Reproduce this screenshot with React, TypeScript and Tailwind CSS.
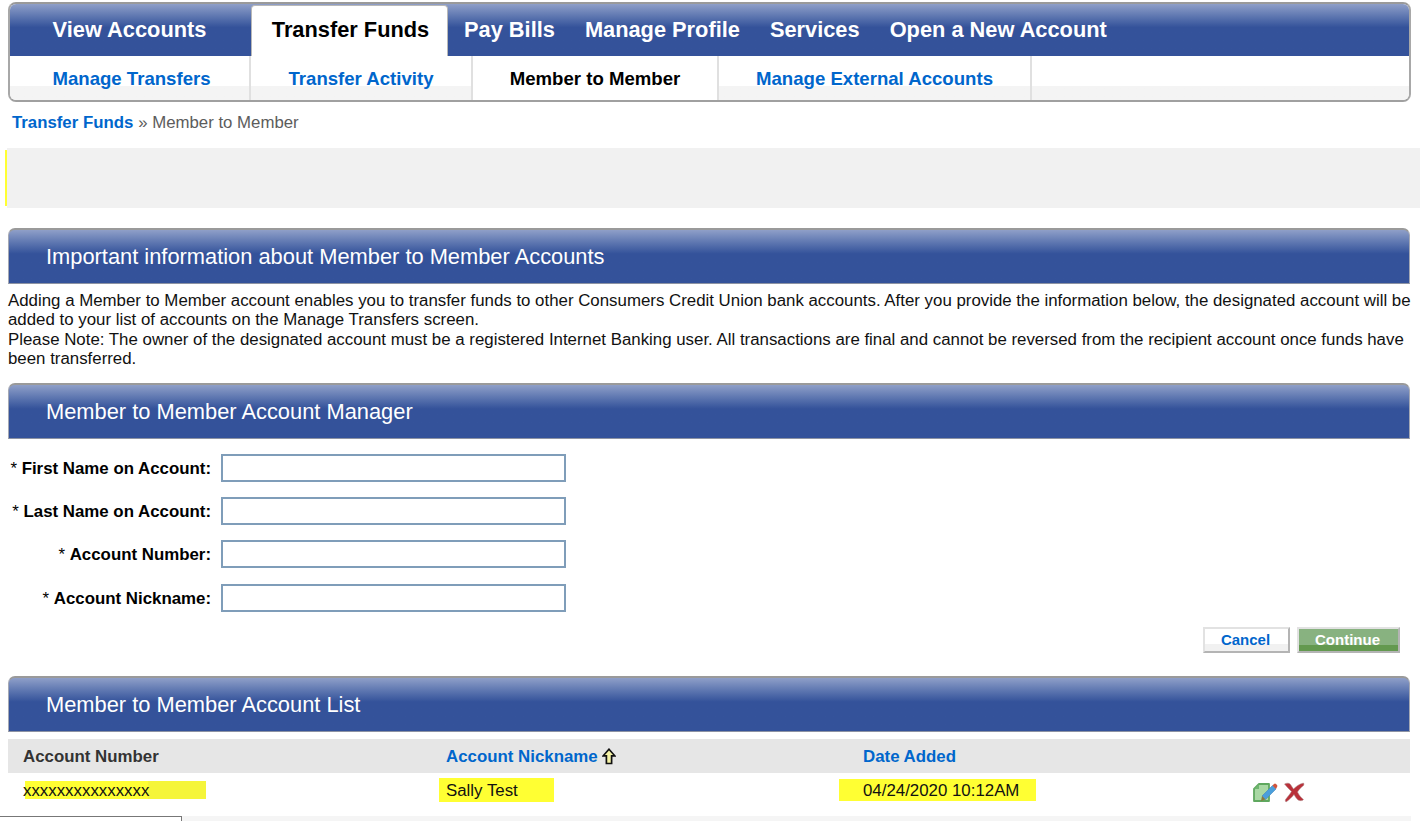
const TOP_TABS = ["Pay Bills", "Manage Profile", "Services", "Open a New Account"];

const FIELDS = [
  "First Name on Account:",
  "Last Name on Account:",
  "Account Number:",
  "Account Nickname:",
];

function SectionHeader({ title }: { title: string }) {
  return (
    <div className="h-[56px] flex items-center pl-[37px] pt-[2px] rounded-tl-[7px] rounded-tr-[7px] border-t-2 border-x border-t-[#9a9a9a] border-x-[#a4a8b4] border-b border-b-[#8d93a3] bg-gradient-to-b from-[#8f9fc8] via-[#34529a] via-45% to-[#34529a] text-white text-[21.85px]">
      {title}
    </div>
  );
}

function EditIcon() {
  return (
    <svg width="26" height="22" viewBox="0 0 26 22" className="blur-[0.4px]">
      <path d="M7 3h10v17H2V8z" fill="#a9d8a4" stroke="#5fa85f" strokeWidth="1.800" strokeLinejoin="round" />
      <path d="M2 8h5V3z" fill="#6fb56f" />
      <path d="M10 15 20.500 4.500 24 8 13.500 18.500z" fill="#4a9fdc" stroke="#3f86bd" strokeWidth="0.6" />
      <path d="m20.500 4.500 1.500-1.500a1.500 1.500 0 0 1 2 0l1 1a1.500 1.500 0 0 1 0 2L24 8z" fill="#d0543c" />
      <path d="m10 15 3.500 3.500-4.500 1.500z" fill="#8a7a3c" />
    </svg>
  );
}

function DeleteIcon() {
  return (
    <svg width="22" height="21" viewBox="0 0 22 21" className="blur-[0.4px]">
      <path
        d="M1.500 2c2-1.200 5-1.200 6 .5 1 1.500 2 3 3 4.500C13 4.500 16 2 20.500 1c.5 1 .5 2 0 2.500-2.500 2-4.500 4-6 6.500 1.500 3 3.500 5.500 6 7.500-1 1.500-3.500 1.500-5.500.5-1.500-1.500-3-3.500-4-5.500-2 2.500-4.500 5-8 7.500-.5-.5-1-1.500-.5-2.500 2-2.500 4.500-5.500 6-8C6.500 7.500 4 5 1.500 2z"
        fill="#b9313a"
        stroke="#a98a8a"
        strokeWidth="0.5"
      />
    </svg>
  );
}

function SortArrow() {
  return (
    <svg width="14" height="17" viewBox="0 0 14 17">
      <path d="M7 1.200 12.800 7.800H9.600v7.700H4.400V7.800H1.200z" fill="#f6f3a6" stroke="#111" strokeWidth="1.700" strokeLinejoin="miter" />
    </svg>
  );
}

export default function App() {
  return (
    <div className="w-[1420px] h-[821px] overflow-hidden bg-white relative font-['Liberation_Sans',Arial,sans-serif] text-black">
      <div className="pt-[2px] pl-[8px] pr-[9px]">
        {/* main nav */}
        <div className="h-[100px] border-2 border-t-[#9a9a9a] border-x-[#a8a8a8] border-b-[#a0a0a0] rounded-[8px] overflow-hidden">
          <div className="h-[52px] flex items-end bg-gradient-to-b from-[#8f9fc8] via-[#34529a] via-45% to-[#34529a] text-white font-bold text-[21.8px]">
            <div className="w-[241px] h-full flex items-center justify-center pr-[2px]">View Accounts</div>
            <div className="w-[197px] h-[51px] flex items-center justify-center pl-[2px] pb-[2px] bg-white text-black border-x border-t border-[#b8b8b8] rounded-t-[4px]">
              Transfer Funds
            </div>
            <div className="h-full flex items-center pl-[1px]">
              {TOP_TABS.map((t) => (
                <span key={t} className="px-[15px] whitespace-nowrap">{t}</span>
              ))}
            </div>
          </div>
          <div className="h-[44px] flex font-bold text-[18.6px] text-[#0066cc] bg-gradient-to-b from-white from-68% to-[#f4f4f4] to-68%">
            <div className="w-[241px] flex items-center justify-center pt-[2px] pl-[4px] border-r-2 border-[#e0e0e0]">Manage Transfers</div>
            <div className="w-[222px] flex items-center justify-center pt-[2px] border-r-2 border-[#e0e0e0]">Transfer Activity</div>
            <div className="w-[246px] flex items-center justify-center pt-[2px] border-r-2 border-[#e0e0e0] text-black bg-white">Member to Member</div>
            <div className="w-[313px] flex items-center justify-center pt-[2px] border-r-2 border-[#e0e0e0]">Manage External Accounts</div>
          </div>
        </div>
      </div>

      <div className="h-[46px] pl-[12px] pb-[4px] flex items-center text-[16.8px] text-[#5c5c5c]">
        <span className="font-bold text-[#0066cc] mr-[5px]">Transfer Funds</span>
        » Member to Member
      </div>

      {/* empty message box */}
      <div className="ml-[5px] h-[60px] flex items-center">
        <div className="w-[2px] h-[56px] bg-[#ffff33]" />
        <div className="flex-1 h-full bg-[#f1f1f1]" />
      </div>

      <div className="pl-[8px] pr-[10px] pt-[20px]">
        <SectionHeader title="Important information about Member to Member Accounts" />
        <p className="mt-[7px] -mr-[3px] text-[16.85px] leading-[19.3px] text-[#111]">
          Adding a Member to Member account enables you to transfer funds to other Consumers Credit Union bank accounts. After you provide the information below, the designated account will be added to your list of accounts on the Manage Transfers screen.
          <br />
          Please Note: The owner of the designated account must be a registered Internet Banking user. All transactions are final and cannot be reversed from the recipient account once funds have been transferred.
        </p>

        <div className="mt-[15px]">
          <SectionHeader title="Member to Member Account Manager" />
        </div>

        <div className="mt-[15px] flex flex-col gap-[15px]">
          {FIELDS.map((f) => (
            <div key={f} className="flex items-center h-[28px] last:mt-[1px]">
              <label className="w-[203px] text-right text-[16.85px] font-bold whitespace-nowrap">
                <span className="font-normal">* </span>
                {f}
              </label>
              <input className="ml-[10px] w-[345px] h-[28px] bg-white border-2 border-[#7f9db9] outline-none" />
            </div>
          ))}
        </div>

        <div className="mt-[15px] pr-[10px] flex justify-end gap-[7px] font-bold text-[15px]">
          <button className="w-[87px] h-[26px] pr-[2px] border-2 border-t-[#e2e2e2] border-l-[#e2e2e2] border-r-[#b4b4b4] border-b-[#b4b4b4] text-[#0066cc] bg-gradient-to-b from-white from-70% to-[#f1f1f1] to-70%">
            Cancel
          </button>
          <button className="w-[103px] h-[26px] pr-[2px] border-2 border-t-[#e2e2e2] border-l-[#e2e2e2] border-r-[#b4b4b4] border-b-[#b4b4b4] text-white bg-gradient-to-b from-[#88b280] from-75% to-[#63994f] to-75%">
            Continue
          </button>
        </div>

        <div className="mt-[23px]">
          <SectionHeader title="Member to Member Account List" />
        </div>

        <div className="mt-[7px] h-[34px] bg-[#e6e6e6] flex items-center font-bold text-[16.85px]">
          <div className="w-[438px] pl-[15px] text-[#333]">Account Number</div>
          <div className="w-[417px] text-[#0066cc] flex items-center gap-[4px]">
            Account Nickname
            <SortArrow />
          </div>
          <div className="text-[#0066cc]">Date Added</div>
        </div>

        <div className="h-[42px] flex items-center pb-[8px] text-[16.85px] text-[#111]">
          <div className="w-[431px] pl-[17px]">
            <div className="w-[181px] h-[18px] bg-[#f5f53a]">
              <div className="w-[123px] h-full flex items-center bg-[#ffff33]">
                <span className="-ml-[2px] whitespace-nowrap">xxxxxxxxxxxxxxx</span>
              </div>
            </div>
          </div>
          <div className="w-[400px]">
            <span className="inline-flex items-center pl-[7px] w-[115px] h-[24px] bg-[#ffff33]">Sally Test</span>
          </div>
          <div className="w-[413px]">
            <span className="inline-flex items-center pl-[24px] w-[197px] h-[22px] bg-[#ffff33] whitespace-nowrap">04/24/2020 10:12AM</span>
          </div>
          <div className="flex items-center gap-[5px] pt-[4px]">
            <EditIcon />
            <DeleteIcon />
          </div>
        </div>
      </div>

      {/* cut-off window strip along the bottom edge */}
      <div className="absolute left-0 right-0 bottom-0 h-[5px] flex">
        <div className="w-[182px] border-t border-r border-[#777] bg-white" />
        <div className="w-[1229px] bg-[#f5f5f5]" />
      </div>
    </div>
  );
}
